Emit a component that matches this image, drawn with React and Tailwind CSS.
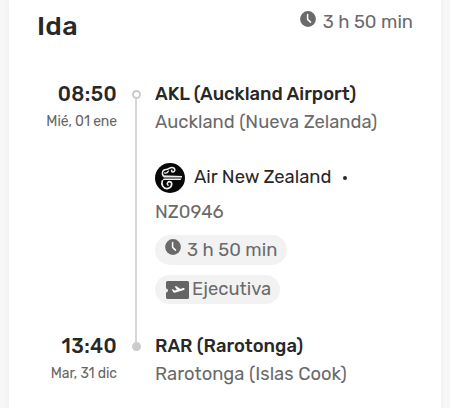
const ClockIcon = ({ className }) => (
    <svg viewBox="0 0 16 16" className={className}>
        <circle cx="8" cy="8" r="7.9" fill="#6a6a6a" />
        <path d="M7.6 3.6v4.8l2.9 2.7" fill="none" stroke="white" strokeWidth="1.5" strokeLinecap="round" />
    </svg>
);

const TicketIcon = () => (
    <svg viewBox="0 0 23 18" className="h-[18px] w-[23px] shrink-0">
        <path
            d="M1.5 0h20A1.5 1.5 0 0 1 23 1.5v15a1.5 1.5 0 0 1-1.5 1.5h-20A1.5 1.5 0 0 1 0 16.5V11.5a1.9 1.9 0 0 0 0-4V1.5A1.5 1.5 0 0 1 1.5 0z"
            fill="#656565"
        />
        <path
            d="M5.8 8.6l1.1-.3 1.8 1.3 2.3-.7-2.3-3.4 1.5-.4 4.2 2.8 2.7-.8c1.7-.4 2.2 1.4.6 1.9l-8.9 2.7c-.8.2-1.3 0-1.700-.6z"
            fill="white"
        />
    </svg>
);

const AirlineLogo = () => (
    <svg viewBox="0 0 30 30" className="size-[30px] shrink-0">
        <circle cx="15" cy="15" r="15" fill="#080808" />
        <g fill="none" stroke="#eeeeee" strokeLinecap="round">
            <path d="M8.3 13C6.200 9.500 8 6.500 11 6.500c2.600 0 3.500-2.100 6-2.100 3.300 0 3.800 4.300 1 4.600-1.300.1-1.800-1.200-1.200-1.800" strokeWidth="1.500" />
            <path d="M9.600 9.900c1.700.7 3-.3 3.800-1.800" strokeWidth="1.300" />
            <path d="M7.300 18c-1.500 3.400.9 7.800 4.900 7.600 4.800-.3 5.300-5.500 3.400-6.700" strokeWidth="1.700" />
            <path d="M15.600 18.900c-2.500-1.100-4.500 2.100-2.500 3.300" strokeWidth="1.500" />
        </g>
        <path d="M7.700 12.200L27 12.900V14.400H8.700z" fill="#eeeeee" />
        <path d="M8.700 15.600H26.700L25.500 17H9L6.600 18.400z" fill="#eeeeee" />
    </svg>
);

const Stop = ({ time, date, code, place, filled }) => (
    <div className="flex">
        <div className="w-[108px] text-right">
            <p className="h-[27px] text-[20px] leading-[27px] font-medium tracking-[0.4px] text-[#282828]">{time}</p>
            <p className="h-[27px] text-[14px] leading-[27px] tracking-[-0.1px] text-[#666]">{date}</p>
        </div>
        <div className="flex w-[38px] justify-center">
            <span
                className={`mt-[9px] size-[9px] rounded-full border-2 border-[#cbcbcb] ${filled ? 'bg-[#cbcbcb]' : 'bg-white'}`}
            />
        </div>
        <div className="text-[18.4px] leading-[27px] whitespace-nowrap">
            <p className="h-7 font-medium text-[#282828]">{code}</p>
            <p className="h-[26px] text-[#6a6a6a]">{place}</p>
        </div>
    </div>
);

export default function App() {
    return (
        <div className="h-[408px] w-[450px] overflow-hidden bg-[#f7f7f7] px-[9px] font-['Rubik','Roboto',sans-serif]">
            <div className="h-full bg-white shadow-[0_0_5px_rgba(0,0,0,0.05)]">
                {/* Header */}
                <div className="flex h-[81px] justify-between pr-[28px] pl-[28px]">
                    <h1 className="mt-[9px] text-[27px] leading-[34px] font-medium tracking-[0.3px] text-[#282828]">Ida</h1>
                    <div className="mt-[8px] flex h-[28px] text-[#6a6a6a]">
                        <ClockIcon className="mt-[3px] mr-[7px] size-4" />
                        <span className="text-[18.4px] leading-[28px]">3 h 50 min</span>
                    </div>
                </div>

                {/* Departure */}
                <Stop time="08:50" date="Mié, 01 ene" code="AKL (Auckland Airport)" place="Auckland (Nueva Zelanda)" />

                {/* Flight */}
                <div className="flex h-[198px]">
                    <div className="-mt-[36px] ml-[126px] h-[244px] w-[2px] shrink-0 bg-[#d6d6d6]" />
                    <div className="ml-[18px] pt-[28px] text-[18.4px]">
                        <div className="flex h-[30px] items-center text-[#282828]">
                            <AirlineLogo />
                            <span className="ml-[9px]">Air New Zealand</span>
                            <span className="ml-[12px] size-1 rounded-full bg-[#282828]" />
                        </div>
                        <p className="mt-[5px] mb-[9px] h-[28px] leading-[28px] text-[#6a6a6a]">NZ0946</p>
                        <div className="flex h-[30px] w-[132px] items-center rounded-full bg-[#f2f2f2] pl-[10px] text-[#6a6a6a]">
                            <ClockIcon className="mr-[6px] mb-[6px] size-4" />
                            <span className="pt-0.5">3 h 50 min</span>
                        </div>
                        <div className="mt-[10px] flex h-[29px] w-[125px] items-center rounded-full bg-[#f2f2f2] pl-[11px] text-[#6a6a6a]">
                            <TicketIcon />
                            <span className="ml-[3px]">Ejecutiva</span>
                        </div>
                    </div>
                </div>

                {/* Arrival */}
                <Stop time="13:40" date="Mar, 31 dic" code="RAR (Rarotonga)" place="Rarotonga (Islas Cook)" filled />
            </div>
        </div>
    );
}
